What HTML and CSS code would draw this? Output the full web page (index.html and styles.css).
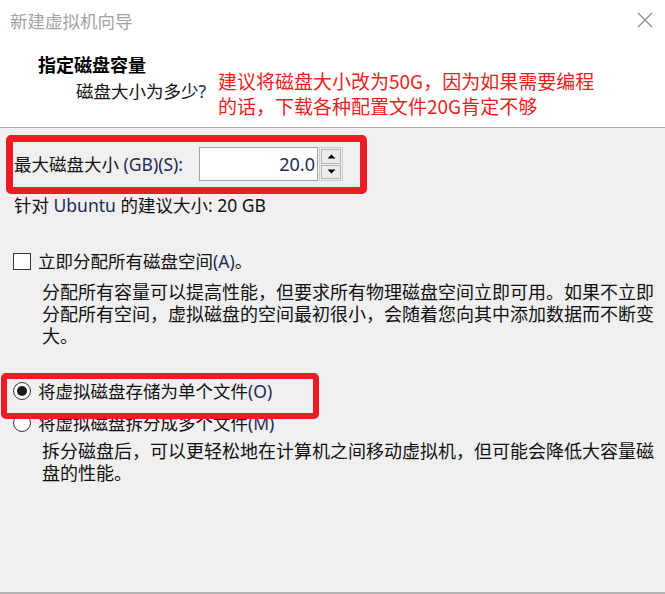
FILE: index.html
```html
<!DOCTYPE html>
<html lang="zh-CN">
<head>
<meta charset="utf-8">
<title>新建虚拟机向导</title>
<link rel="stylesheet" href="styles.css">
</head>
<body>
<div class="dialog">
  <header class="header">
    <div class="titlebar">
      <span class="title">新建虚拟机向导</span>
      <svg class="close" width="16" height="16" viewBox="0 0 16 16"><path d="M1 1L15 15M15 1L1 15" stroke="#8c8c8c" stroke-width="1.2" fill="none"/></svg>
    </div>
    <h1 class="heading">指定磁盘容量</h1>
    <p class="subheading">磁盘大小为多少<span class="lat">?</span></p>
    <div class="note">建议将磁盘大小改为50G，因为如果需要编程<br>的话，下载各种配置文件20G肯定不够</div>
  </header>
  <main class="content">
    <div class="size-row">
      <label class="size-label">最大磁盘大小 <span class="lat">(GB)(S):</span></label>
      <div class="spin">
        <div class="spin-input"><span class="lat">20.0</span></div>
        <div class="spin-buttons">
          <div class="spin-btn"><svg width="9" height="5" viewBox="0 0 9 5"><path d="M0.5 4.5L4.5 0.5L8.5 4.5Z" fill="#000"/></svg></div>
          <div class="spin-btn"><svg width="9" height="5" viewBox="0 0 9 5"><path d="M0.5 0.5L4.5 4.5L8.5 0.5Z" fill="#000"/></svg></div>
        </div>
      </div>
    </div>
    <p class="recommend">针对 <span class="lat">Ubuntu</span> 的建议大小: 20 GB</p>
    <div class="option-row check-row">
      <span class="checkbox"></span>
      <span class="option-label">立即分配所有磁盘空间<span class="lat">(A)</span>。</span>
    </div>
    <p class="desc desc-alloc">分配所有容量可以提高性能，但要求所有物理磁盘空间立即可用。如果不立即分配所有空间，虚拟磁盘的空间最初很小，会随着您向其中添加数据而不断变大。</p>
    <div class="option-row radio-row radio-first">
      <span class="radio checked"></span>
      <span class="option-label">将虚拟磁盘存储为单个文件<span class="lat">(O)</span></span>
    </div>
    <div class="option-row radio-row radio-second">
      <span class="radio"></span>
      <span class="option-label">将虚拟磁盘拆分成多个文件<span class="lat">(M)</span></span>
    </div>
    <p class="desc desc-split">拆分磁盘后，可以更轻松地在计算机之间移动虚拟机，但可能会降低大容量磁盘的性能。</p>
  </main>
  <div class="footer-line"></div>
  <div class="mark mark-size"></div>
  <div class="mark mark-radio"></div>
</div>
</body>
</html>
```
FILE: styles.css
```css
* { box-sizing: border-box; }
html, body { margin: 0; padding: 0; }
body {
  width: 665px;
  height: 594px;
  overflow: hidden;
  background: #f0f0f0;
  font-family: "Noto Sans", "Noto Sans CJK SC", sans-serif;
  color: #111;
}
.dialog {
  position: relative;
  width: 665px;
  height: 594px;
  display: flex;
  flex-direction: column;
}
.lat { color: #1f2a58; }

/* header */
.header {
  position: relative;
  height: 128px;
  background: #ffffff;
  border-bottom: 1px solid #a9a9a9;
  flex: none;
}
.titlebar {
  display: flex;
  justify-content: space-between;
  align-items: flex-start;
  padding: 10px 12px 0 10px;
  height: 32px;
}
.title {
  font-size: 17.5px;
  line-height: 22px;
  color: #a3a3a3;
}
.close { margin-top: 2px; }
.heading {
  margin: 22px 0 0 38px;
  font-size: 18px;
  line-height: 22px;
  font-weight: bold;
  color: #000;
}
.subheading {
  margin: 4px 0 0 76px;
  font-size: 17.5px;
  line-height: 22px;
  color: #111;
}
.note {
  position: absolute;
  left: 218px;
  top: 68px;
  font-family: "Noto Sans CJK SC", sans-serif;
  font-size: 19px;
  line-height: 25px;
  color: #f01c1c;
  white-space: nowrap;
}

/* content */
.content {
  flex: 1;
  padding-top: 19px;
}
.size-row {
  display: flex;
  align-items: center;
  padding-left: 14px;
}
.size-label {
  width: 185px;
  font-size: 17.5px;
  line-height: 22px;
  white-space: nowrap;
}
.spin {
  display: flex;
  height: 34px;
}
.spin-input {
  width: 119px;
  height: 34px;
  background: #fff;
  border: 1px solid #a2a2a2;
  text-align: right;
  padding-right: 2px;
  font-size: 18px;
  line-height: 32px;
}
.spin-buttons {
  width: 24px;
  height: 34px;
  margin-left: 1px;
  border: 1px solid #cfcfcf;
  display: flex;
  flex-direction: column;
  padding: 1px;
  gap: 1px;
}
.spin-btn {
  flex: 1;
  border: 1px solid #b4b4b4;
  background: #ececec;
  display: flex;
  align-items: center;
  justify-content: center;
}
.recommend {
  margin: 13px 0 0 14px;
  font-size: 17.5px;
  line-height: 22px;
}
.option-row {
  display: flex;
  align-items: center;
  height: 22px;
  padding-left: 13px;
}
.option-label {
  font-size: 17.5px;
  line-height: 22px;
  margin-left: 7px;
}
.check-row { margin-top: 34px; }
.checkbox {
  width: 18px;
  height: 17px;
  background: #fff;
  border: 1px solid #333;
}
.radio {
  width: 18px;
  height: 18px;
  border-radius: 50%;
  background: #fff;
  border: 1px solid #333;
  display: flex;
  align-items: center;
  justify-content: center;
}
.radio.checked::after {
  content: "";
  width: 10px;
  height: 10px;
  border-radius: 50%;
  background: #1a1a1a;
}
.radio-first { margin-top: 34px; }
.radio-second { margin-top: 10px; }
.desc {
  margin: 0 0 0 42px;
  width: 623px;
  font-family: "Noto Sans CJK SC", sans-serif;
  font-size: 18px;
  line-height: 22px;
  color: #111;
}
.desc-alloc { margin-top: 8px; }
.desc-split { margin-top: 5px; }

.footer-line {
  flex: none;
  height: 2px;
  background: #b3b3b3;
}

/* annotation overlays */
.mark {
  position: absolute;
  border: 7px solid #ed1c24;
  border-radius: 5px;
}
.mark-size {
  left: 6px;
  top: 135px;
  width: 361px;
  height: 59px;
}
.mark-radio {
  left: 1px;
  top: 373px;
  width: 318px;
  height: 46px;
  border-width: 6px;
}
```
